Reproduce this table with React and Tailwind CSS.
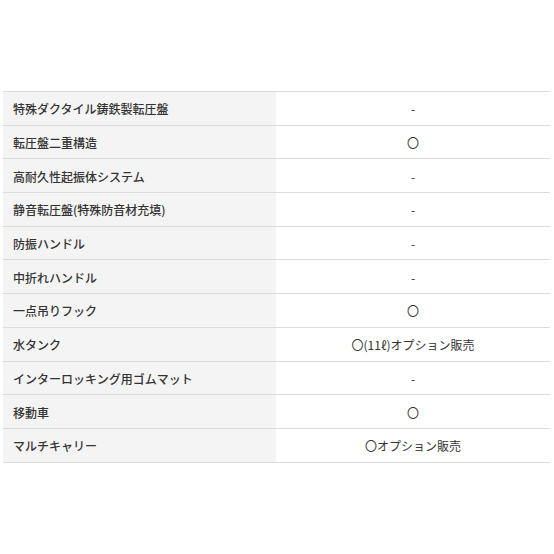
const rows = [
  ["特殊ダクタイル鋳鉄製転圧盤", "-"],
  ["転圧盤二重構造", "〇"],
  ["高耐久性起振体システム", "-"],
  ["静音転圧盤(特殊防音材充填)", "-"],
  ["防振ハンドル", "-"],
  ["中折れハンドル", "-"],
  ["一点吊りフック", "〇"],
  ["水タンク", "〇(11ℓ)オプション販売"],
  ["インターロッキング用ゴムマット", "-"],
  ["移動車", "〇"],
  ["マルチキャリー", "〇オプション販売"],
];

export default function App() {
  return (
    <div
      className="w-[554px] h-[554px] bg-white pt-[91px] pl-[3px] pr-[4px]"
      style={{ fontFamily: '"Noto Sans CJK JP", "Noto Sans", sans-serif' }}
    >
      <div className="border-t border-[#dcdcdc]">
        {rows.map(([label, value]) => (
          <div key={label} className="flex h-[33.7px] border-b border-[#dcdcdc]">
            <div className="w-[273px] bg-[#f4f4f4] flex items-center pl-[10px] pt-[2px] text-[12px] font-medium text-[#333]">
              {label}
            </div>
            <div className="flex-1 flex items-center justify-center pt-[2px] text-[12px] text-[#333]">
              {value}
            </div>
          </div>
        ))}
      </div>
    </div>
  );
}
